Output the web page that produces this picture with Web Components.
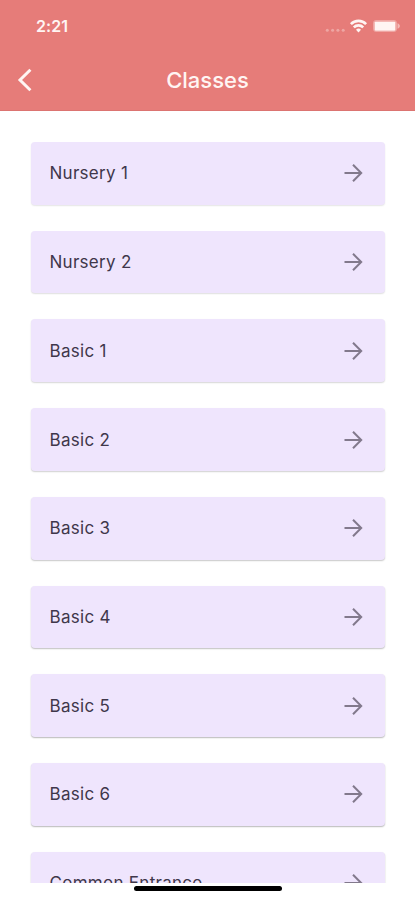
<!DOCTYPE html>
<html lang="en">
<head>
<meta charset="UTF-8">
<meta name="viewport" content="width=device-width, initial-scale=1.0">
<title>Classes</title>
<style>
    :root {
        --color-primary: #e67c79;
        --color-card: #efe5fd;
        --color-text: #3f374b;
        --color-icon: #82798c;
        --font-main: Inter, Roboto, sans-serif;
    }
    body {
        margin: 0;
        background: #fff;
        font-family: var(--font-main);
        overflow: hidden;
    }
</style>
</head>
<body>
<classes-screen></classes-screen>

<script>
// status-bar
class StatusBar extends HTMLElement {
    constructor() {
        super();
        this.attachShadow({ mode: 'open' });
        this._render();
    }

    _render() {
        this.shadowRoot.innerHTML = /*html*/`
        <style>
            :host {
                display: flex;
                justify-content: space-between;
                align-items: center;
                box-sizing: border-box;
                height: 52px;
                padding: 0 14px 0 36px;
                color: #fff5f3;
            }
            .time {
                font-size: 16px;
                font-weight: 600;
                letter-spacing: 0.1px;
            }
            svg { display: block; }
        </style>
        <span class="time"><slot></slot></span>
        <svg width="76" height="16" viewBox="0 0 76 16" fill="currentColor">
            <g opacity="0.35">
                <circle cx="2.3" cy="12.2" r="1.5"/>
                <circle cx="7.6" cy="12.2" r="1.5"/>
                <circle cx="12.9" cy="12.2" r="1.5"/>
                <circle cx="18.2" cy="12.2" r="1.5"/>
            </g>
            <g fill="none" stroke="currentColor" stroke-width="2.6">
                <path d="M25.9 6.1a10.5 10.5 0 0 1 15.2 0"/>
                <path d="M28.8 9.4a6.5 6.5 0 0 1 9.4 0"/>
            </g>
            <path d="M33.5 14.4l-2.5-2.6a3.6 3.6 0 0 1 5 0z"/>
            <rect x="48.5" y="2.5" width="23" height="11" rx="2.4" fill="none" stroke="currentColor" opacity="0.35"/>
            <rect x="49.5" y="3.4" width="21" height="9.4" rx="1.2"/>
            <path d="M72.5 5.2c3.2 1.3 3.2 4.3 0 5.6z" opacity="0.5"/>
        </svg>`;
    }
}
customElements.define('status-bar', StatusBar);

// nav-bar
class NavBar extends HTMLElement {
    constructor() {
        super();
        this.attachShadow({ mode: 'open' });
        this._render();
    }

    _render() {
        this.shadowRoot.innerHTML = /*html*/`
        <style>
            :host {
                display: grid;
                grid-template-columns: 48px 1fr 48px;
                align-items: center;
                height: 56px;
                color: #fff5f3;
            }
            .back { margin-left: 16px; }
            .back svg { display: block; }
            h1 {
                margin: 0;
                text-align: center;
                font-size: 22px;
                font-weight: 500;
                line-height: 28px;
            }
        </style>
        <div class="back">
            <svg width="18" height="24" viewBox="0 0 18 24" fill="none" stroke="currentColor" stroke-width="3">
                <path d="M14.4 1.8L4 12l10.4 10.2"/>
            </svg>
        </div>
        <h1><slot></slot></h1>`;
    }
}
customElements.define('nav-bar', NavBar);

// class-card
class ClassCard extends HTMLElement {
    constructor() {
        super();
        this.attachShadow({ mode: 'open' });
        this._render();
    }

    _render() {
        this.shadowRoot.innerHTML = /*html*/`
        <style>
            :host {
                display: flex;
                flex: none;
                justify-content: space-between;
                align-items: center;
                box-sizing: border-box;
                height: 62.7px;
                padding: 0 22px 0 18.5px;
                border-radius: 4px;
                background: var(--color-card);
                box-shadow: 0 1px 1.5px rgba(0, 0, 0, var(--shadow-alpha, 0.2));
                color: var(--color-text);
                font-size: 17px;
                letter-spacing: 0.28px;
            }
            svg {
                display: block;
                color: var(--color-icon);
            }
        </style>
        <span><slot></slot></span>
        <svg width="20" height="20" viewBox="0 0 20 20" fill="none" stroke="currentColor" stroke-width="2">
            <path d="M1.5 10H18M10 1.8L18.2 10L10 18.2"/>
        </svg>`;
    }
}
customElements.define('class-card', ClassCard);

// classes-screen
class ClassesScreen extends HTMLElement {
    constructor() {
        super();
        this.attachShadow({ mode: 'open' });
        this.classes = [
            'Nursery 1', 'Nursery 2',
            'Basic 1', 'Basic 2', 'Basic 3', 'Basic 4', 'Basic 5', 'Basic 6',
            'Common Entrance'
        ];
        this._render();
    }

    // cards further down the screen cast a stronger shadow
    _shadow(index) {
        return Math.min(0.1 + index * 0.03, 0.28).toFixed(2);
    }

    _render() {
        this.shadowRoot.innerHTML = /*html*/`
        <style>
            :host {
                display: flex;
                flex-direction: column;
                height: 900px;
                background: #fff;
            }
            header {
                flex: none;
                box-sizing: border-box;
                height: 111px;
                background: var(--color-primary);
                border-bottom: 1px solid #dc7471;
            }
            main {
                flex: 1;
                min-height: 0;
                overflow: hidden;
                display: flex;
                flex-direction: column;
                gap: 26px;
                padding: 31.1px 30px 0 31px;
            }
            footer {
                flex: none;
                display: flex;
                justify-content: center;
                height: 17px;
            }
            .home-indicator {
                width: 148px;
                height: 5px;
                margin-top: 3px;
                border-radius: 3px;
                background: #000;
            }
        </style>
        <header>
            <status-bar>2:21</status-bar>
            <nav-bar>Classes</nav-bar>
        </header>
        <main>
            ${this.classes.map((name, i) => `<class-card style="--shadow-alpha: ${this._shadow(i)}">${name}</class-card>`).join('')}
        </main>
        <footer><div class="home-indicator"></div></footer>`;
    }
}
customElements.define('classes-screen', ClassesScreen);
</script>
</body>
</html>
